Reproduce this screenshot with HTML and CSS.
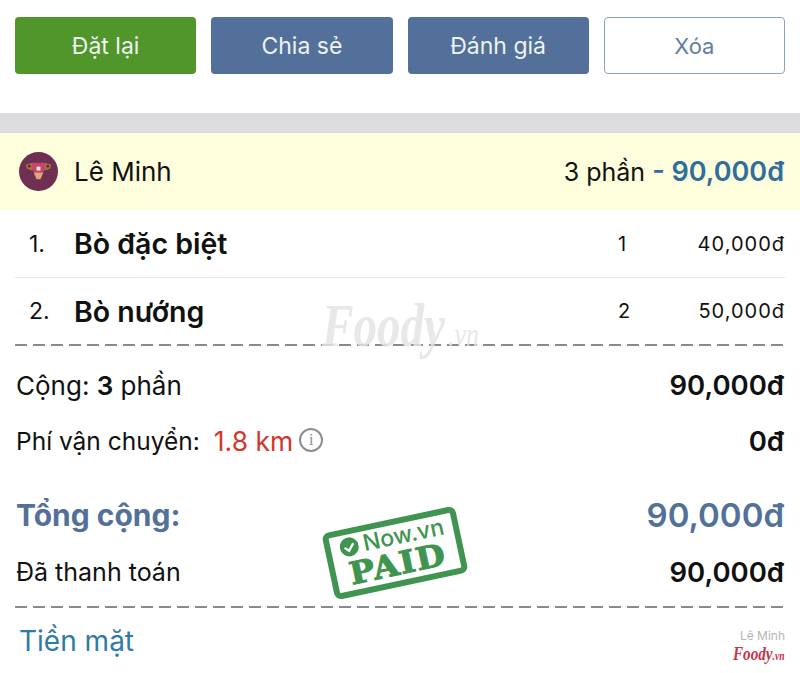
FILE: index.html
```html
<!DOCTYPE html>
<html lang="vi">
<head>
<meta charset="utf-8">
<title>Đơn hàng</title>
<link rel="stylesheet" href="styles.css">
</head>
<body>
<main class="page">
  <div class="actions">
    <button class="btn btn-green">Đặt lại</button>
    <button class="btn btn-blue">Chia sẻ</button>
    <button class="btn btn-blue">Đánh giá</button>
    <button class="btn btn-outline">Xóa</button>
  </div>
  <div class="band"></div>
  <div class="user">
    <div class="user-left">
      <svg class="avatar" viewBox="0 0 40 40" aria-hidden="true">
        <circle cx="20" cy="20" r="20" fill="#6e2f52"/>
        <path d="M7 13l7-2 1 6-2 2-5-2z" fill="#a9743f"/>
        <path d="M33 13l-7-2-1 6 2 2 5-2z" fill="#a9743f"/>
        <circle cx="10.500" cy="14.500" r="1.500" fill="#5a2a35"/>
        <circle cx="29.500" cy="14.500" r="1.500" fill="#5a2a35"/>
        <path d="M14 11h12l1 7-3 3H16l-3-3z" fill="#c9426a"/>
        <path d="M15 21h10l-3 7h-4z" fill="#e0a878"/>
        <rect x="18" y="15" width="4" height="4" fill="#f6ece4"/>
      </svg>
      <span class="user-name">Lê Minh</span>
    </div>
    <div class="user-right">3 phần <span class="user-total">- 90,000đ</span></div>
  </div>
  <ol class="items">
    <li class="item">
      <span class="item-no">1.</span>
      <span class="item-name">Bò đặc biệt</span>
      <span class="item-qty">1</span>
      <span class="item-price">40,000đ</span>
    </li>
    <li class="item">
      <span class="item-no">2.</span>
      <span class="item-name">Bò nướng</span>
      <span class="item-qty">2</span>
      <span class="item-price">50,000đ</span>
    </li>
  </ol>
  <div class="dash"></div>
  <section class="summary">
    <div class="row">
      <span class="label-sum">Cộng: <b class="semi">3</b> phần</span>
      <b class="amount">90,000đ</b>
    </div>
    <div class="row">
      <span class="ship-label">Phí vận chuyển:<span class="km">1.8 km</span><span class="info">i</span></span>
      <b class="amount">0đ</b>
    </div>
    <div class="row row-total">
      <span>Tổng cộng:</span>
      <span class="total-amount">90,000đ</span>
    </div>
    <div class="row row-paid">
      <span class="label-paid">Đã thanh toán</span>
      <b class="amount">90,000đ</b>
    </div>
  </section>
  <div class="dash"></div>
  <footer class="foot">
    <span class="method">Tiền mặt</span>
    <div class="brand">
      <span class="brand-name">Lê Minh</span>
      <span class="brand-logo">Foody<small>.vn</small></span>
    </div>
  </footer>
  <div class="watermark">Foody<small>.vn</small></div>
  <div class="stamp">
    <div class="stamp-top">
      <svg class="stamp-check" viewBox="0 0 20 20" aria-hidden="true">
        <circle cx="10" cy="10" r="10" fill="#3f9450"/>
        <path d="M5 10l4 4 6-7" fill="none" stroke="#fff" stroke-width="2.400"/>
      </svg>
      <span>Now.vn</span>
    </div>
    <div class="stamp-paid">PAID</div>
  </div>
</main>
</body>
</html>
```
FILE: styles.css
```css
* { box-sizing: border-box; }
html, body { margin: 0; padding: 0; background: #fff; }
body { font-family: Inter, "Liberation Sans", sans-serif; color: #111; }
.page { position: relative; width: 800px; height: 673px; overflow: hidden; }

.actions { display: grid; grid-template-columns: repeat(4, 1fr); gap: 15px; padding: 17px 15px 39px; }
.btn { height: 57px; border-radius: 4px; border: 0; font: 400 23px Inter, "Liberation Sans", sans-serif; color: #eef3f3; padding: 0; }
.btn-green { background: #50962a; }
.btn-blue { background: #527099; }
.btn-outline { background: #fff; border: 1.5px solid #8ea3bb; color: #5f7ea2; font-size: 22px; }

.band { height: 20px; background: #dcdcde; }
.user { height: 77px; background: #fefedc; display: flex; justify-content: space-between; align-items: center; padding: 0 16px 0 19px; }
.user-left { display: flex; align-items: center; gap: 16px; }
.avatar { width: 39px; height: 39px; display: block; }
.user-name { font-size: 26px; }
.user-right { font-size: 25px; }
.user-total { color: #2f6f9c; font-weight: 600; font-size: 27px; }

.items { list-style: none; margin: 0; padding: 0 15px; }
.item { height: 68px; display: flex; align-items: center; border-bottom: 1px solid #e6e6e6; }
.item:last-child { height: 66px; border-bottom: 0; }
.item-no { width: 59px; padding-left: 14px; font-size: 23px; }
.item-name { flex: 1; font-size: 28.500px; font-weight: 600; }
.item-qty { width: 77px; font-size: 20px; }
.item-price { width: 90px; text-align: right; font-size: 20px; letter-spacing: 1px; white-space: nowrap; }

.dash { height: 2px; margin: 0 15px; background: repeating-linear-gradient(90deg, #8a8a8a 0 12px, transparent 12px 18px); }

.summary { padding: 11px 1px 7px; margin: 0 15px; }
.row { height: 56px; display: flex; justify-content: space-between; align-items: center; }
.row-total { margin-top: 18px; color: #527099; font-weight: 700; font-size: 30px; }
.row-paid { padding-top: 1px; }
.label-sum { font-size: 26px; }
.label-paid { font-size: 25px; }
.total-amount { font-size: 33px; font-weight: 600; }
.amount { font-size: 27.500px; font-weight: 600; color: #111; }
.semi { font-weight: 600; }
.ship-label { display: flex; align-items: center; font-size: 24.500px; }
.km { color: #d2372c; font-size: 26.500px; margin-left: 14px; }
.info { width: 24px; height: 24px; border: 2px solid #8e8e8e; border-radius: 50%; color: #8e8e8e; font: 400 16px/20px "Liberation Serif", serif; text-align: center; margin-left: 6px; margin-top: -3px; }

.foot { display: flex; justify-content: space-between; align-items: flex-start; padding: 14px 15px 0 19px; height: 64px; }
.method { color: #2f7aa8; font-size: 28px; line-height: 38px; }
.brand { display: flex; flex-direction: column; align-items: flex-end; padding-top: 7px; }
.brand-name { font-size: 12px; line-height: 14px; color: #b4b4b4; }
.brand-logo { font: italic 700 19px/22px "Liberation Serif", serif; color: #c8334a; transform: scaleX(.8); transform-origin: right center; white-space: nowrap; }
.brand-logo small { font-size: 12px; }

.watermark { position: absolute; left: 322px; top: 290px; font: italic 700 62px/70px "Liberation Serif", serif; color: #e4e4e4; opacity: .85; transform: scaleX(.76); transform-origin: left center; white-space: nowrap; }
.watermark small { font-size: 34px; font-weight: 400; margin-left: 4px; }

.stamp { position: absolute; left: 327px; top: 519px; width: 136px; height: 68px; transform: rotate(-12deg); border: 6px solid #3f9450; border-radius: 7px; color: #3f9450; display: flex; flex-direction: column; align-items: center; }
.stamp-top { display: flex; align-items: center; gap: 5px; font-size: 23px; font-weight: 500; line-height: 25px; }
.stamp-check { width: 19px; height: 19px; }
.stamp-paid { font: 900 31px/28px "DejaVu Serif", serif; letter-spacing: 1px; -webkit-text-stroke: 1px #3f9450; transform: scaleX(1.08); }
```
